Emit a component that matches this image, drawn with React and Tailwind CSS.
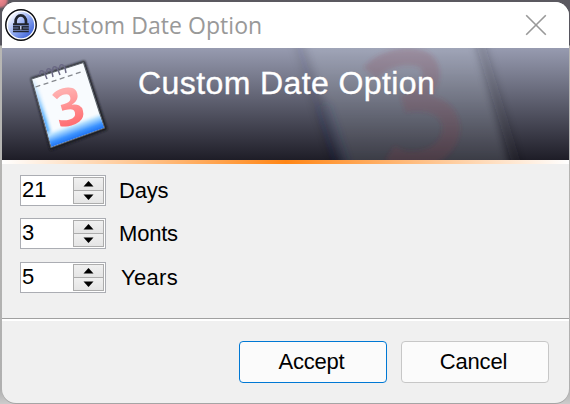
import React from "react";

function LockIcon() {
  return (
    <svg width="32" height="32" viewBox="0 0 32 32" className="shrink-0">
      <defs>
        <linearGradient id="lockFill" x1="0" y1="0" x2="1" y2="1">
          <stop offset="0.15" stopColor="#f4f7ff" />
          <stop offset="0.55" stopColor="#87a2ee" />
          <stop offset="0.9" stopColor="#3b61d8" />
        </linearGradient>
      </defs>
      <circle cx="16" cy="16" r="15.2" fill="#fff" stroke="#0b0c10" strokeWidth="1.5" />
      <circle cx="16" cy="16" r="13.2" fill="url(#lockFill)" />
      <path d="M10.6 15v-2.6a5.2 6 0 0 1 10.4 0V15" fill="none" stroke="#20242d" strokeWidth="2.7" />
      <path d="M8 14.3h15.8v9H8z" fill="#20242d" />
      <path d="M8 16.6h15.8M8 19h5.5M18 19h5.8M8 21.4h15.8" stroke="#8ea5e6" strokeWidth="0.7" />
      <path d="M15.8 17v3.4" stroke="#dce5ff" strokeWidth="1.3" />
    </svg>
  );
}

function BannerArt() {
  return (
    <svg className="absolute inset-0" width="567" height="112" viewBox="2 48 567 112">
      <defs>
        <linearGradient id="blueBottom" x1="71" y1="122" x2="78" y2="141" gradientUnits="userSpaceOnUse">
          <stop offset="0" stopColor="#f7fcff" stopOpacity="0" />
          <stop offset="0.25" stopColor="#b5e0ff" />
          <stop offset="0.6" stopColor="#3d93ff" />
          <stop offset="1" stopColor="#0759e8" />
        </linearGradient>
        <linearGradient id="blueLeft" x1="38" y1="112" x2="48" y2="109" gradientUnits="userSpaceOnUse">
          <stop offset="0" stopColor="#0b6df5" />
          <stop offset="0.5" stopColor="#7fc6ff" />
          <stop offset="1" stopColor="#f7fcff" stopOpacity="0" />
        </linearGradient>
        <linearGradient id="leftFade" x1="0" y1="76" x2="0" y2="120" gradientUnits="userSpaceOnUse">
          <stop offset="0" stopColor="#000" />
          <stop offset="1" stopColor="#fff" />
        </linearGradient>
        <mask id="leftMask" maskUnits="userSpaceOnUse" x="20" y="50" width="100" height="110">
          <rect x="20" y="50" width="100" height="110" fill="url(#leftFade)" />
        </mask>
        <linearGradient id="digitFill" x1="0" y1="0" x2="0" y2="1">
          <stop offset="0.3" stopColor="#ffaeae" />
          <stop offset="0.8" stopColor="#ff6c70" />
        </linearGradient>
        <linearGradient id="ghostFill" x1="0" y1="0" x2="0" y2="1">
          <stop offset="0" stopColor="#c8d2dc" stopOpacity="0.2" />
          <stop offset="1" stopColor="#a0a8b0" stopOpacity="0.22" />
        </linearGradient>
        <filter id="shadow" x="-20%" y="-20%" width="140%" height="140%">
          <feGaussianBlur stdDeviation="1.3" />
        </filter>
        <filter id="haze" x="-20%" y="-20%" width="140%" height="140%">
          <feGaussianBlur stdDeviation="2.2" />
        </filter>
        <filter id="soft" x="-40%" y="-20%" width="180%" height="140%">
          <feGaussianBlur stdDeviation="4" />
        </filter>
        <filter id="slight" x="-20%" y="-20%" width="140%" height="140%">
          <feGaussianBlur stdDeviation="0.5" />
        </filter>
      </defs>

      <path d="M302 30L472 30L514 180L350 180Z" fill="url(#ghostFill)" filter="url(#soft)" />
      <path d="M479 40L520 175" stroke="#202028" strokeOpacity="0.2" strokeWidth="9" filter="url(#soft)" />
      <path d="M297 40L338 175" stroke="#202028" strokeOpacity="0.1" strokeWidth="8" filter="url(#soft)" />
      <path d="M324 105L348 180" stroke="#204478" strokeOpacity="0.16" strokeWidth="12" filter="url(#soft)" />
      <path
        d="M370 73C384 57 408 54 422 59C434 65 433 81 424 90C418 97 411 101 404 104C430 99 448 108 451 125C453 144 436 160 411 160C402 160 396 157 390 153"
        fill="none"
        stroke="#8a3840"
        strokeOpacity="0.2"
        strokeWidth="17"
        filter="url(#haze)"
      />

      <path d="M32 79L84 62L106 129L51 149Z" fill="#1a1c21" stroke="#1a1c21" strokeWidth="2.5" strokeLinejoin="round" filter="url(#shadow)" />
      <g filter="url(#slight)">
        <path d="M31.5 79L83.5 62.5L104.5 128L51 147.5Z" fill="#f8fbfe" stroke="#5d636b" strokeWidth="1.2" strokeLinejoin="round" />
        <path d="M32.5 80L44 76L62 143L51.5 146.5Z" fill="url(#blueLeft)" mask="url(#leftMask)" />
        <path d="M46.5 130L99 113L104 127.7L51.5 146.7Z" fill="url(#blueBottom)" />
        <path d="M35.5 87L84 71" stroke="#85888e" strokeWidth="1.3" strokeDasharray="5 3.5" />
        <path
          d="M40 75C39 70 43 69 45 74L47 79M47 73C46 68 50 67 52 72L53 77M53 71C52 66 56 65 58 70L60 75M60 69C59 64 63 63 65 68L66 73"
          fill="none"
          stroke="#6b6985"
          strokeWidth="1.5"
        />
        <text
          x="68.5"
          y="125"
          transform="rotate(-15 68.5 106)"
          textAnchor="middle"
          fontFamily="'Open Sans', sans-serif"
          fontSize="52"
          fontWeight="700"
          fill="url(#digitFill)"
        >
          3
        </text>
      </g>
    </svg>
  );
}

function ArrowButton({ up }) {
  return (
    <div className="flex h-[14px] w-[31px] items-center justify-center border border-[#acacac] bg-[linear-gradient(to_bottom,#f0f0f0,#e5e5e5)]">
      <svg width="11" height="6" viewBox="0 0 11 6">
        <path d={up ? "M5.5 0L10.5 5.5H0.5Z" : "M5.5 6L10.5 0.5H0.5Z"} fill="#000" />
      </svg>
    </div>
  );
}

function SpinnerRow({ value, label, labelClass }) {
  return (
    <div className="flex h-[31px] items-center">
      <div className="flex h-[31px] w-[86px] justify-between border border-[#abadb3] bg-white pr-px">
        <span className="pl-px text-[22px] leading-[28px]">{value}</span>
        <div className="flex flex-col pt-px">
          <ArrowButton up />
          <div className="-mt-px flex">
            <ArrowButton />
          </div>
        </div>
      </div>
      <span className={labelClass}>{label}</span>
    </div>
  );
}

export default function App() {
  return (
    <div className="h-[404px] w-[570px] overflow-hidden bg-[radial-gradient(circle_at_0_0,#f08a90_0px,#d87880_6px,transparent_9px),linear-gradient(to_bottom,#5b5960_0px,#55545d_45px,#b8b7b4_46px,#b0b0b0_390px,#ccc_404px)] pl-[2px] pt-[2px] font-['Liberation_Sans',Arial,sans-serif] text-black">
      <div className="flex h-[401px] w-[567px] flex-col overflow-hidden rounded-[14px] bg-[#f0f0f0] shadow-[0_1px_0_0_#a5a5a5]">
        <header className="flex h-[46px] shrink-0 items-center bg-white pl-[3px] pr-[22px]">
          <LockIcon />
          <h1 className="ml-[5px] grow whitespace-nowrap font-['Open_Sans','Noto_Sans',sans-serif] text-[23px] leading-[32px] tracking-[0.05px] text-[#999]">
            Custom Date Option
          </h1>
          <svg width="22" height="22" viewBox="0 0 22 22" className="shrink-0">
            <path d="M1.2 1.2L20.8 20.8M20.8 1.2L1.2 20.8" stroke="#999" strokeWidth="1.6" />
          </svg>
        </header>

        <section className="relative h-[112px] shrink-0 bg-[linear-gradient(to_bottom,#979bb0,#1e1d27)]">
          <BannerArt />
          <h2 className="relative whitespace-nowrap pl-[136px] pt-[17px] text-[32px] leading-[36px] tracking-[0.41px] text-white [-webkit-text-stroke:0.35px_white]">
            Custom Date Option
          </h2>
        </section>
        <div className="h-[4px] shrink-0 bg-[linear-gradient(to_right,#fff_0%,#ff8616_50%,#fff_100%)]" />

        <main className="flex h-[154px] shrink-0 flex-col pl-[18px] pt-[11px]">
          <SpinnerRow value="21" label="Days" labelClass="ml-[13px] text-[22px] leading-[28px] tracking-[-0.2px]" />
          <div className="h-[12px]" />
          <SpinnerRow value="3" label="Monts" labelClass="ml-[13px] text-[22px] leading-[28px] tracking-[-0.2px]" />
          <div className="h-[13px]" />
          <SpinnerRow value="5" label="Years" labelClass="ml-[15px] text-[22px] leading-[28px] tracking-[0.3px]" />
        </main>
        <div className="h-[3px] shrink-0 border-t border-[#a0a0a0] bg-white" />

        <footer className="flex gap-[14px] pl-[237px] pt-[20px]">
          <button className="h-[42px] w-[148px] rounded-[4px] border border-[#0078d4] bg-[#fbfbfb] pr-[3px] text-[22px] leading-[28px] tracking-[-0.2px]">
            Accept
          </button>
          <button className="h-[42px] w-[148px] rounded-[4px] border border-[#c7c7c7] bg-[#fbfbfb] pr-[3px] text-[22px] leading-[28px] tracking-[-0.2px]">
            Cancel
          </button>
        </footer>
      </div>
    </div>
  );
}
